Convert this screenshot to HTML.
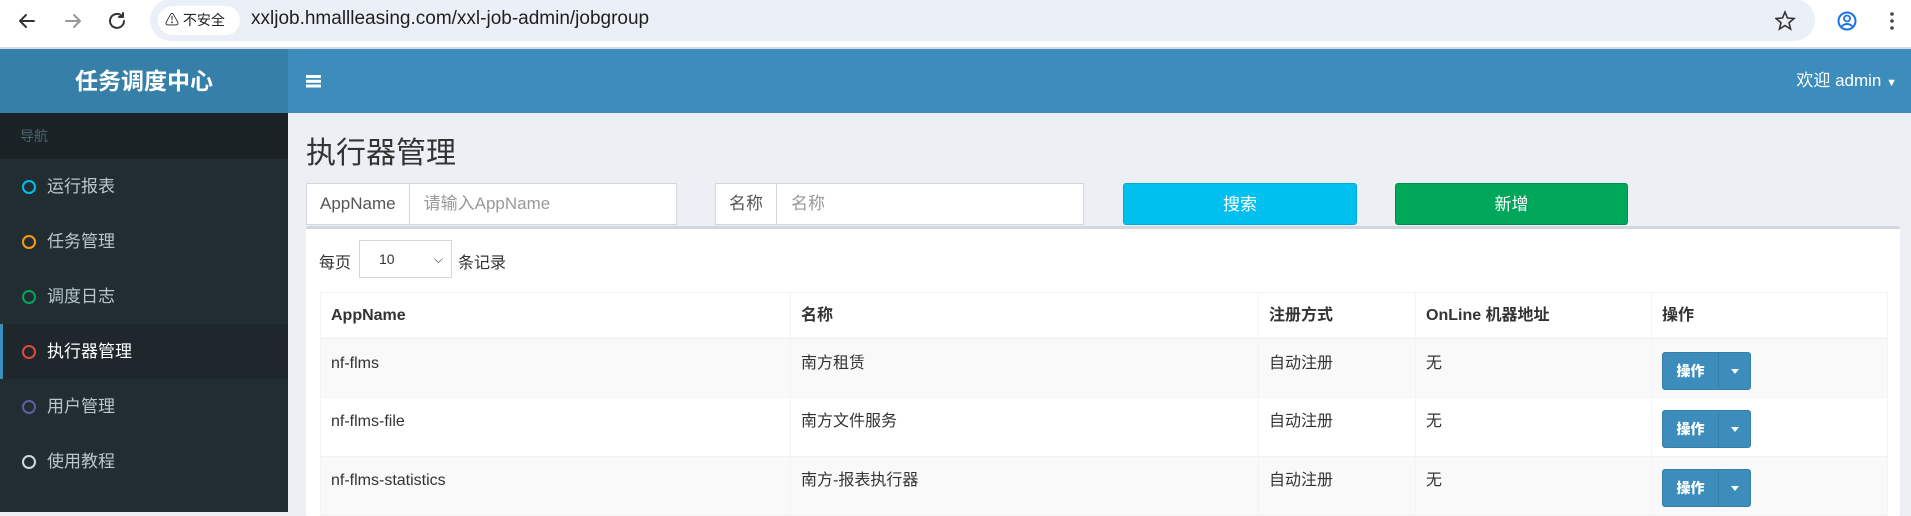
<!DOCTYPE html>
<html><head><meta charset="utf-8"><style>
*{box-sizing:border-box;margin:0;padding:0}
body{width:1911px;height:512px;overflow:hidden;background:#ecf0f5;font-family:"Liberation Sans","Noto Sans CJK SC",sans-serif;color:#333;position:relative}
.abs{position:absolute}
.chrome{left:0;top:0;width:1911px;height:49px;background:#fff;border-bottom:2px solid #d5dbe2}
.pill{left:150px;top:-1px;width:1665px;height:42px;background:#ebf0f8;border-radius:21px}
.chip{left:158px;top:6px;width:82px;height:29px;background:#fff;border-radius:15px;font-size:14px;color:#222;line-height:29px;padding-left:7px}
.url{left:251px;top:8px;font-size:19px;color:#1f1f1f}
.hdr{left:0;top:49px;width:1911px;height:64px;background:#3c8dbc}
.logo{left:0;top:49px;width:288px;height:64px;background:#367fa9;color:#fff;font-weight:bold;font-size:23px;text-align:center;line-height:64px}
.side{left:0;top:113px;width:288px;height:399px;background:#222d32}
.navh{left:0;top:113px;width:288px;height:46px;background:#1a2226;color:#4b646f;font-size:14px;line-height:46px;padding-left:20px}
.mi{left:0;width:288px;height:55px;color:#b8c7ce;font-size:17px;line-height:55px;padding-left:47px}
.mi i{position:absolute;left:22px;top:21px;width:14px;height:14px;border:2.5px solid;border-radius:50%}
.act{background:#1e282c;color:#fff;border-left:3px solid #3c8dbc;padding-left:44px}
.act i{left:19px}
.ig{height:42px;background:#fff;border:1px solid #d2d6de;font-size:17px;line-height:40px}
.ig span{display:inline-block;height:40px;border-right:1px solid #d2d6de;padding:0 13px;color:#555}
.ig em{font-style:normal;color:#999;padding-left:14px}
.btn{height:42px;color:#fff;font-size:17px;text-align:center;line-height:42px;border-radius:3px}
.box{left:306px;top:226px;width:1594px;height:290px;background:#fff;border-top:3px solid #d2d6de;border-radius:3px}
table{position:absolute;left:320px;top:292px;width:1568px;border-collapse:collapse;font-size:16px}
td,th{border:1px solid #f4f4f4;text-align:left;vertical-align:top;padding:14px 10px 0 10px;line-height:20px}
td div,th div{height:20px;line-height:20px;overflow:visible}
th{height:46px;border-bottom:3px solid #f4f4f4;font-weight:bold;padding:13px 10px 0}
tr.r td{height:59px}
tr.o td{background:#f9f9f9}
.op{display:block;width:89px;height:38px;background:#3c8dbc;border:1px solid #367fa9;border-radius:3px;color:#fff;font-size:14px;font-weight:bold;line-height:36px;position:relative;margin-top:-2px}
.op b{position:absolute;left:0;width:55px;text-align:center}
.op s{position:absolute;left:55px;top:0;width:1px;height:36px;background:#367fa9}
.op u{position:absolute;left:68px;top:16px;border:4px solid transparent;border-top:5px solid #fff;border-bottom:0}
</style></head><body>
<div class="abs chrome"></div>
<svg class="abs" style="left:14px;top:8px" width="120" height="26" viewBox="0 0 120 26"><g fill="none" stroke-width="2" stroke-linecap="round" stroke-linejoin="round"><path d="M20 13H6M12 7l-6 6 6 6" stroke="#333"/><path d="M52 13h14M60 7l6 6-6 6" stroke="#999"/><path d="M108 8a7 7 0 1 0 2 5M109 5v4h-4" stroke="#333"/></g></svg>
<div class="abs pill"></div>
<div class="abs chip">⚠ 不安全</div>
<div class="abs url">xxljob.hmallleasing.com/xxl-job-admin/jobgroup</div>
<svg class="abs" style="left:1775px;top:9px" width="130" height="24" viewBox="0 0 130 24"><path d="M10 3l2.5 6 6.5.5-5 4.2 1.6 6.3L10 16.6 4.4 20l1.6-6.3-5-4.2 6.5-.5z" fill="none" stroke="#333" stroke-width="1.6"/><circle cx="72" cy="12" r="8.5" fill="none" stroke="#1a73e8" stroke-width="2"/><circle cx="72" cy="9.5" r="3" fill="none" stroke="#1a73e8" stroke-width="1.8"/><path d="M66.5 17.5q5.5-5 11 0" fill="none" stroke="#1a73e8" stroke-width="1.8"/><circle cx="117" cy="5" r="1.8" fill="#444"/><circle cx="117" cy="12" r="1.8" fill="#444"/><circle cx="117" cy="19" r="1.8" fill="#444"/></svg>
<div class="abs hdr"></div>
<div class="abs logo">任务调度中心</div>
<svg class="abs" style="left:306px;top:74px" width="15" height="14"><rect y="1" width="15" height="3" fill="#fff"/><rect y="5.8" width="15" height="3" fill="#fff"/><rect y="10.5" width="15" height="3" fill="#fff"/></svg>
<div class="abs" style="right:14px;top:49px;line-height:64px;color:#fff;font-size:17px">欢迎 admin <span style="font-size:11px">▼</span></div>
<div class="abs side"></div>
<div class="abs navh">导航</div>
<div class="abs mi" style="top:159px"><i style="color:#00c0ef"></i>运行报表</div>
<div class="abs mi" style="top:214px"><i style="color:#f39c12"></i>任务管理</div>
<div class="abs mi" style="top:269px"><i style="color:#00a65a"></i>调度日志</div>
<div class="abs mi act" style="top:324px"><i style="color:#dd4b39"></i>执行器管理</div>
<div class="abs mi" style="top:379px"><i style="color:#605ca8"></i>用户管理</div>
<div class="abs mi" style="top:434px"><i style="color:#d2d6de"></i>使用教程</div>
<div class="abs" style="left:306px;top:128px;font-size:30px;color:#333">执行器管理</div>
<div class="abs ig" style="left:306px;top:183px;width:371px"><span>AppName</span><em>请输入AppName</em></div>
<div class="abs ig" style="left:715px;top:183px;width:369px"><span>名称</span><em>名称</em></div>
<div class="abs btn" style="left:1123px;top:183px;width:234px;background:#00c0ef;border:1px solid #00acd6">搜索</div>
<div class="abs btn" style="left:1395px;top:183px;width:233px;background:#00a65a;border:1px solid #008d4c">新增</div>
<div class="abs box"></div>
<div class="abs" style="left:319px;top:249px;font-size:16px">每页</div>
<div class="abs" style="left:359px;top:240px;width:93px;height:38px;border:1px solid #d2d6de;font-size:14px;line-height:36px;padding-left:19px">10<span style="position:absolute;right:8px;font-size:12px">⌵</span></div>
<div class="abs" style="left:458px;top:249px;font-size:16px">条记录</div>
<table>
<tr><th style="width:470px"><div>AppName</div></th><th style="width:468px"><div>名称</div></th><th style="width:157px"><div>注册方式</div></th><th style="width:236px"><div>OnLine 机器地址</div></th><th><div>操作</div></th></tr>
<tr class="r o"><td><div>nf-flms</div></td><td><div>南方租赁</div></td><td><div>自动注册</div></td><td><div>无</div></td><td><span class="op"><b>操作</b><s></s><u></u></span></td></tr>
<tr class="r"><td><div>nf-flms-file</div></td><td><div>南方文件服务</div></td><td><div>自动注册</div></td><td><div>无</div></td><td><span class="op"><b>操作</b><s></s><u></u></span></td></tr>
<tr class="r o"><td><div>nf-flms-statistics</div></td><td><div>南方-报表执行器</div></td><td><div>自动注册</div></td><td><div>无</div></td><td><span class="op"><b>操作</b><s></s><u></u></span></td></tr>
</table>
</body></html>
